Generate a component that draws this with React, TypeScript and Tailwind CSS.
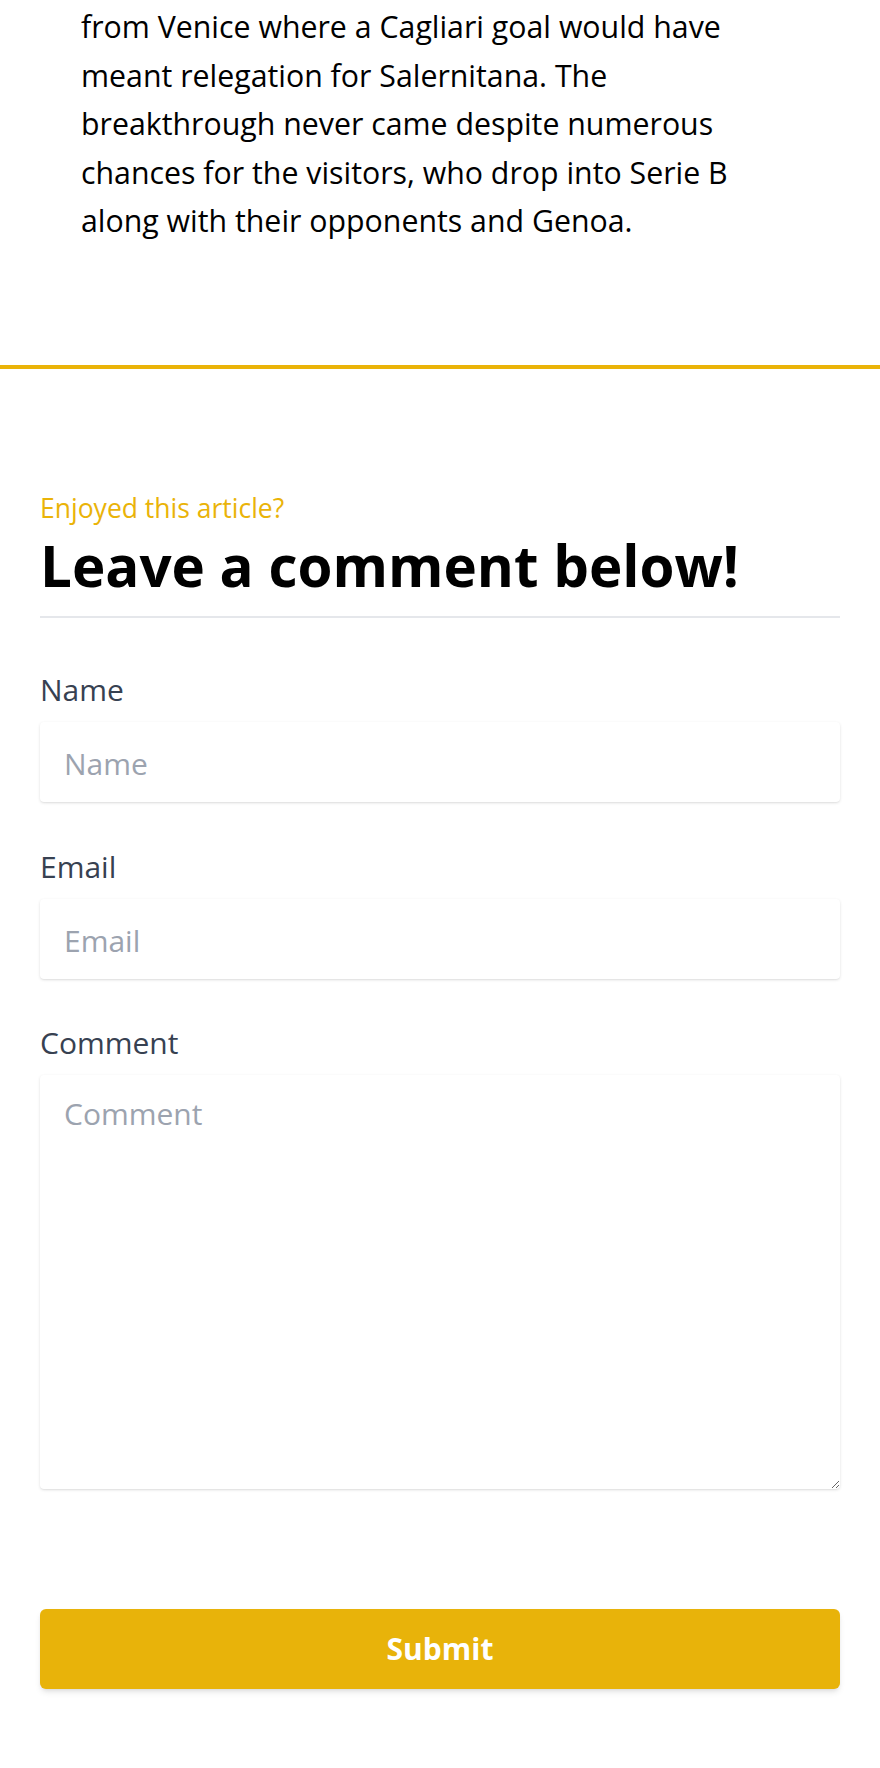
import React from "react";

export default function App() {
  const font = { fontFamily: '"Open Sans", "Noto Sans", sans-serif' };
  return (
    <div className="w-[880px] min-h-[1768px] bg-white" style={font}>
      <div className="px-[81px] pt-[3px] pb-[119px]">
        <p className="text-[30.3px] leading-[48.5px] text-black">
          from Venice where a Cagliari goal would have
          <br />
          meant relegation for Salernitana. The
          <br />
          breakthrough never came despite numerous
          <br />
          chances for the visitors, who drop into Serie B
          <br />
          along with their opponents and Genoa.
        </p>
      </div>
      <div className="h-1 w-full bg-[#eab308]" />
      <div className="px-10 pt-[123px] pb-[78px]">
        <p className="text-[26.5px] leading-[32px] text-[#eab308]">Enjoyed this article?</p>
        <h2 className="mt-3 border-b-2 border-[#e5e7eb] pb-[20px] text-[56.5px] font-bold leading-[60px] text-black">
          Leave a comment below!
        </h2>
        <form className="mt-[54px] flex flex-col" onSubmit={(e) => e.preventDefault()}>
          <label className="block text-[30px] leading-[36px] text-[#374151]">Name</label>
          <input
            placeholder="Name"
            className="mt-[14px] h-[80px] w-full rounded-sm bg-white px-[24px] pt-[3px] text-[30px] text-[#374151] shadow-[0_1px_3px_0_rgb(0_0_0/0.12),0_1px_2px_-1px_rgb(0_0_0/0.1)] outline-none placeholder:text-[#9ca3af]"
          />
          <label className="mt-[47px] block text-[30px] leading-[36px] text-[#374151]">Email</label>
          <input
            placeholder="Email"
            className="mt-[14px] h-[80px] w-full rounded-sm bg-white px-[24px] pt-[3px] text-[30px] text-[#374151] shadow-[0_1px_3px_0_rgb(0_0_0/0.12),0_1px_2px_-1px_rgb(0_0_0/0.1)] outline-none placeholder:text-[#9ca3af]"
          />
          <label className="mt-[46px] block text-[30px] leading-[36px] text-[#374151]">Comment</label>
          <textarea
            placeholder="Comment"
            className="mt-[14px] h-[414px] w-full rounded-sm bg-white px-[24px] py-[21px] text-[30px] leading-[36px] text-[#374151] shadow-[0_1px_3px_0_rgb(0_0_0/0.12),0_1px_2px_-1px_rgb(0_0_0/0.1)] outline-none placeholder:text-[#9ca3af]"
          />
          <button
            type="submit"
            className="mt-[120px] h-[80px] w-full rounded-md bg-[#e8b30a] text-[30px] font-bold text-white shadow-[0_4px_6px_-1px_rgb(0_0_0/0.1),0_2px_4px_-2px_rgb(0_0_0/0.1)]"
          >
            Submit
          </button>
        </form>
      </div>
    </div>
  );
}
